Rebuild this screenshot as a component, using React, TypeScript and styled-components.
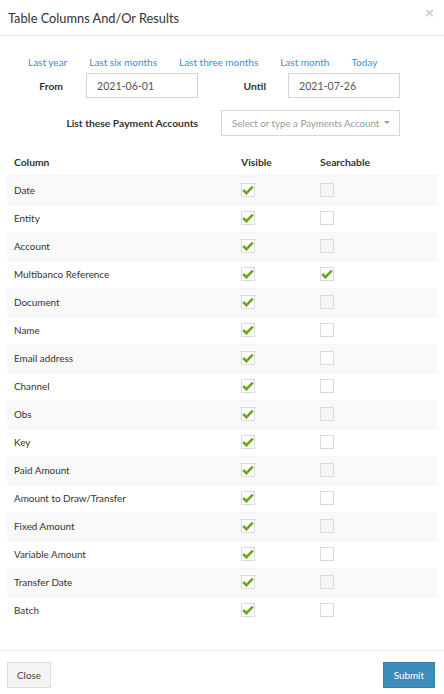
import React from "react";
import styled, { createGlobalStyle } from "styled-components";

const Global = createGlobalStyle`
  html, body { margin: 0; padding: 0; background: #fff; }
  body { font-family: "Lato", "Open Sans", sans-serif; color: #333; }
  * { box-sizing: border-box; }
`;

const Modal = styled.div`
  width: 444px;
  height: 694px;
  display: flex;
  flex-direction: column;
  background: #fff;
`;

const Header = styled.div`
  height: 36px;
  border-bottom: 1px solid #e9e9e9;
  display: flex;
  align-items: center;
  justify-content: space-between;
  padding: 0 9px 0 8px;
`;

const Title = styled.h4`
  margin: 0;
  font-size: 12.8px;
  font-weight: 400;
  color: #333;
  padding-top: 1px;
`;

const CloseX = styled.span`
  font-size: 13px;
  color: #cbcbcb;
  font-weight: 700;
  align-self: flex-start;
  margin-top: 5px;
  font-family: "DejaVu Sans", sans-serif;
`;

const Body = styled.div`
  flex: 1;
  padding: 0 7px;
`;

const Links = styled.div`
  display: flex;
  gap: 22px;
  padding: 18px 0 0 21px;
  height: 37px;
`;

const QuickLink = styled.a`
  font-size: 10px;
  color: #3a8ceb;
  text-decoration: none;
  cursor: pointer;
  line-height: 16px;
`;

const FormRow = styled.div<{ $mt: number }>`
  display: flex;
  align-items: center;
  margin-top: ${(p) => p.$mt}px;
`;

const Label = styled.label<{ $w: number; $gap: number }>`
  width: ${(p) => p.$w}px;
  margin-right: ${(p) => p.$gap}px;
  text-align: right;
  font-size: 10.3px;
  font-weight: 700;
  color: #333;
`;

const Input = styled.div<{ $w: number }>`
  width: ${(p) => p.$w}px;
  height: 25px;
  border: 1px solid #d2d6de;
  padding-left: 10px;
  display: flex;
  align-items: center;
  font-size: 10.6px;
  color: #555;
`;

const Select = styled.div`
  width: 179px;
  height: 26px;
  border: 1px solid #d8d8d8;
  padding: 0 9px 0 10px;
  display: flex;
  align-items: center;
  justify-content: space-between;
  font-size: 9.7px;
  color: #999;
  white-space: nowrap;
`;

const Caret = styled.span`
  width: 0;
  height: 0;
  border-left: 3px solid transparent;
  border-right: 3px solid transparent;
  border-top: 3px solid #999;
  margin-bottom: 2px;
`;

const Table = styled.div`
  margin-top: 12px;
`;

const Row = styled.div<{ $striped?: boolean; $head?: boolean }>`
  display: grid;
  grid-template-columns: 227px 79px 1fr;
  height: 28px;
  align-items: center;
  background: ${(p) => (p.$striped ? "#f9f9f9" : "#fff")};
  border-top: ${(p) => (p.$head ? "none" : "1px solid #f4f4f4")};
  border-bottom: ${(p) => (p.$head ? "1px solid #f4f4f4" : "none")};
`;

const Cell = styled.div<{ $bold?: boolean }>`
  padding-left: 7px;
  padding-bottom: ${(p) => (p.$bold ? 0 : 1)}px;
  font-size: ${(p) => (p.$bold ? 10.3 : 9.9)}px;
  font-weight: ${(p) => (p.$bold ? 700 : 400)};
  color: #333;
  display: flex;
  align-items: center;
`;

const Box = styled.span<{ $disabled?: boolean }>`
  width: 14px;
  height: 14px;
  border: 1px solid #dcdcdc;
  background: ${(p) => (p.$disabled ? "#f6f6f6" : "#fff")};
  display: inline-flex;
  align-items: center;
  justify-content: center;
`;

const Footer = styled.div`
  height: 44px;
  border-top: 1px solid #f0f0f0;
  display: flex;
  justify-content: space-between;
  align-items: flex-start;
  padding: 11px 9px 0 7px;
`;

const Button = styled.button<{ $primary?: boolean }>`
  height: 26px;
  padding: 0 ${(p) => (p.$primary ? 10 : 9)}px;
  font-family: inherit;
  font-size: 9.9px;
  border: 1px solid ${(p) => (p.$primary ? "#367fa9" : "#ddd")};
  background: ${(p) => (p.$primary ? "#3c8dbc" : "#f4f4f4")};
  color: ${(p) => (p.$primary ? "#fff" : "#444")};
  border-radius: 0;
`;

const Check = () => (
  <svg width="12" height="10" viewBox="0 0 12 10">
    <path d="M1.2 5 L4.4 8.2 L10.8 1.6" fill="none" stroke="#6fa51c" strokeWidth="2.6" />
  </svg>
);

const rows: [string, boolean][] = [
  ["Date", false],
  ["Entity", true],
  ["Account", false],
  ["Multibanco Reference", true],
  ["Document", false],
  ["Name", true],
  ["Email address", true],
  ["Channel", true],
  ["Obs", false],
  ["Key", true],
  ["Paid Amount", false],
  ["Amount to Draw/Transfer", true],
  ["Fixed Amount", false],
  ["Variable Amount", true],
  ["Transfer Date", false],
  ["Batch", true],
];

export default function App() {
  return (
    <Modal>
      <Global />
      <Header>
        <Title>Table Columns And/Or Results</Title>
        <CloseX>×</CloseX>
      </Header>
      <Body>
        <Links>
          <QuickLink>Last year</QuickLink>
          <QuickLink>Last six months</QuickLink>
          <QuickLink>Last three months</QuickLink>
          <QuickLink>Last month</QuickLink>
          <QuickLink>Today</QuickLink>
        </Links>
        <FormRow $mt={0}>
          <Label $w={56} $gap={23}>From</Label>
          <Input $w={112}>2021-06-01</Input>
          <Label $w={68} $gap={22}>Until</Label>
          <Input $w={112}>2021-07-26</Input>
        </FormRow>
        <FormRow $mt={12}>
          <Label $w={191} $gap={23}>List these Payment Accounts</Label>
          <Select>
            <span>Select or type a Payments Account</span>
            <Caret />
          </Select>
        </FormRow>
        <Table>
          <Row $head>
            <Cell $bold>Column</Cell>
            <Cell $bold>Visible</Cell>
            <Cell $bold>Searchable</Cell>
          </Row>
          {rows.map(([name, enabled], i) => (
            <Row key={name} $striped={i % 2 === 0}>
              <Cell>{name}</Cell>
              <Cell>
                <Box>
                  <Check />
                </Box>
              </Cell>
              <Cell>
                <Box $disabled={!enabled}>{name === "Multibanco Reference" ? <Check /> : null}</Box>
              </Cell>
            </Row>
          ))}
        </Table>
      </Body>
      <Footer>
        <Button>Close</Button>
        <Button $primary>Submit</Button>
      </Footer>
    </Modal>
  );
}
